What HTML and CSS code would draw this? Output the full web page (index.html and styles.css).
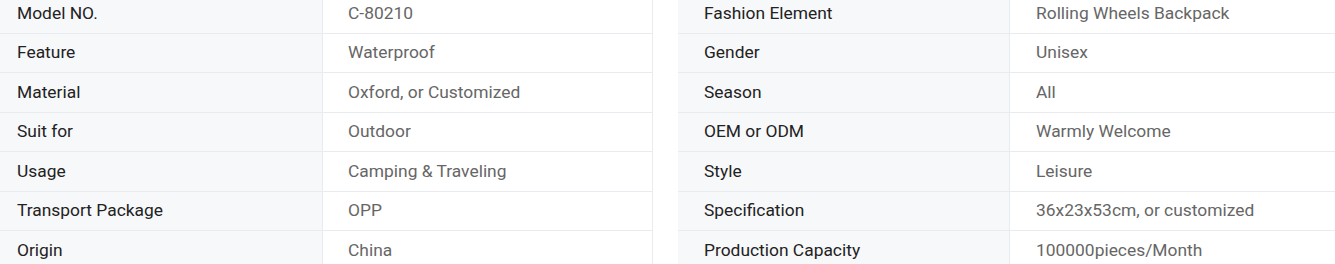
FILE: index.html
```html
<!DOCTYPE html>
<html lang="en">
<head>
<meta charset="utf-8">
<title>Specifications</title>
<link rel="stylesheet" href="styles.css">
</head>
<body>
<div class="spec">
  <div class="table table-left">
    <div class="row"><div class="label">Model NO.</div><div class="value">C-80210</div></div>
    <div class="row"><div class="label">Feature</div><div class="value">Waterproof</div></div>
    <div class="row"><div class="label">Material</div><div class="value">Oxford, or Customized</div></div>
    <div class="row"><div class="label">Suit for</div><div class="value">Outdoor</div></div>
    <div class="row"><div class="label">Usage</div><div class="value">Camping &amp; Traveling</div></div>
    <div class="row"><div class="label">Transport Package</div><div class="value">OPP</div></div>
    <div class="row"><div class="label">Origin</div><div class="value">China</div></div>
  </div>
  <div class="table table-right">
    <div class="row"><div class="label">Fashion Element</div><div class="value">Rolling Wheels Backpack</div></div>
    <div class="row"><div class="label">Gender</div><div class="value">Unisex</div></div>
    <div class="row"><div class="label">Season</div><div class="value">All</div></div>
    <div class="row"><div class="label">OEM or ODM</div><div class="value">Warmly Welcome</div></div>
    <div class="row"><div class="label">Style</div><div class="value">Leisure</div></div>
    <div class="row"><div class="label">Specification</div><div class="value">36x23x53cm, or customized</div></div>
    <div class="row"><div class="label">Production Capacity</div><div class="value">100000pieces/Month</div></div>
  </div>
</div>
</body>
</html>
```
FILE: styles.css
```css
* { box-sizing: border-box; }
html, body { margin: 0; padding: 0; background: #fff; overflow: hidden; }
body {
  font-family: Roboto, "Liberation Sans", Arial, sans-serif;
  font-size: 17.4px;
}
.spec {
  display: flex;
  gap: 25px;
  margin: -6px 0 0 -8px;
  width: 1350px;
}
.table { display: flex; flex-direction: column; }
.table-left { width: 661px; border-right: 1px solid #e8ebf0; }
.table-right { flex: 1; }
.row {
  display: grid;
  grid-template-columns: 331px 1fr;
  height: 39.5px;
  border-bottom: 1px solid #e8ebf0;
}
.table-right .row { grid-template-columns: 332px 1fr; }
.label, .value {
  display: flex;
  align-items: center;
  padding: 0 25px 1px;
  white-space: nowrap;
}
.table-right .label, .table-right .value { padding-left: 26px; }
.label { background: #f7f8fa; color: #222; border-right: 1px solid #e8ebf0; }
.value { background: #fff; color: #666; }
```
